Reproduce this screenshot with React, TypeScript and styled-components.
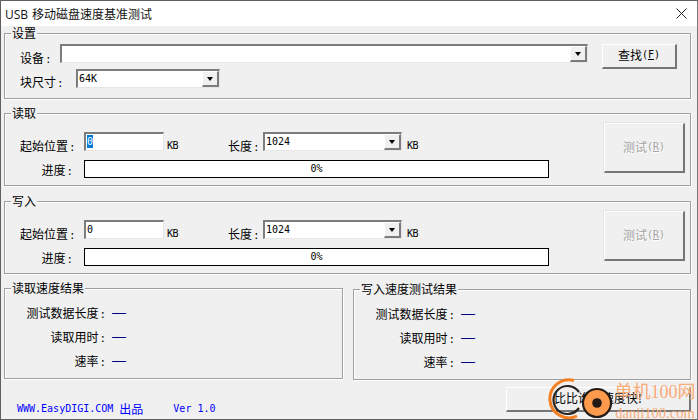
import React from "react";
import styled, { createGlobalStyle } from "styled-components";

const MONO = `"DejaVu Sans Mono", "Liberation Mono", monospace`;

const Global = createGlobalStyle`
  html, body { margin: 0; padding: 0; background: #f0f0f0; }
  body { font-family: "Noto Sans CJK SC", "Liberation Sans", sans-serif; font-size: 12px; color: #000; }
`;

const Window = styled.div`
  position: relative;
  width: 698px;
  height: 420px;
  box-sizing: border-box;
  border: 1px solid #5f5f5f;
  border-right-color: #7a7a7a;
  background: #f0f0f0;
  overflow: hidden;
  display: flex;
  flex-direction: column;
`;

const TitleBar = styled.div`
  height: 25px;
  flex: none;
  background: #fff;
  display: flex;
  align-items: center;
  justify-content: space-between;
  padding: 0 10px 0 4px;
  font-size: 12px;
  line-height: 25px;
  color: #111;
`;

const TitleLatin = styled.span`
  font-family: "Open Sans", "Liberation Sans", sans-serif;
  font-size: 12px;
  margin-right: 4px;
`;

const Content = styled.div`
  flex: 1;
  display: flex;
  flex-direction: column;
  padding: 7px 6px 0 3px;
`;

const Group = styled.section<{ $h: number; $mt?: number; $w?: number }>`
  position: relative;
  box-sizing: border-box;
  height: ${(p) => p.$h}px;
  margin-top: ${(p) => p.$mt ?? 0}px;
  width: ${(p) => (p.$w ? `${p.$w}px` : "auto")};
  border: 1px solid #a0a0a0;
  box-shadow: 1px 1px 0 #fff, inset 1px 1px 0 #fff;
`;

const Legend = styled.h2`
  position: absolute;
  top: -8px;
  left: 6px;
  margin: 0;
  padding: 0 1px 0 1px;
  background: #f0f0f0;
  font-size: 12px;
  font-weight: 400;
  line-height: 14px;
`;

const Row = styled.div<{ $mt?: number; $h?: number }>`
  display: flex;
  align-items: flex-start;
  height: ${(p) => p.$h ?? 19}px;
  margin-top: ${(p) => p.$mt ?? 0}px;
`;

const SettingsBody = styled.div`
  display: flex;
  align-items: flex-start;
  padding: 10px 0 0 15px;
`;

const SettingsFields = styled.div`
  width: 568px;
  display: flex;
  flex-direction: column;
`;

const TestBody = styled.div`
  display: flex;
  align-items: flex-start;
  justify-content: space-between;
  padding: 9px 5px 0 15px;
`;

const TestFields = styled.div`
  padding-top: 9px;
`;

const Label = styled.div<{ $w: number; $mt?: number; $ml?: number; $left?: boolean }>`
  flex: none;
  width: ${(p) => p.$w}px;
  height: 16px;
  margin-top: ${(p) => p.$mt ?? 6}px;
  margin-left: ${(p) => p.$ml ?? 0}px;
  text-align: ${(p) => (p.$left ? "left" : "right")};
  line-height: 16px;
  white-space: nowrap;
`;

const Colon = styled.span`
  font-family: "Liberation Mono", monospace;
  font-size: 11px;
  line-height: 1;
  margin-left: 1px;
`;

const Sunken = styled.div<{ $w: number; $ml?: number }>`
  flex: none;
  box-sizing: border-box;
  width: ${(p) => p.$w}px;
  height: 19px;
  margin-left: ${(p) => p.$ml ?? 0}px;
  background: #fff;
  border-style: solid;
  border-width: 2px 1px 1px 2px;
  border-color: #7c7c7c #e6e6e6 #e6e6e6 #7c7c7c;
  display: flex;
  align-items: flex-start;
  justify-content: space-between;
  font-family: ${MONO};
  font-size: 10px;
  line-height: 15px;
  padding-left: 1px;
`;

const Selected = styled.span`
  background: #0078d7;
  color: #fff;
  display: inline-block;
  height: 13px;
  line-height: 13px;
  margin-top: 1px;
`;

const ArrowButton = styled.div`
  flex: none;
  box-sizing: border-box;
  width: 17px;
  height: 16px;
  background: #f0f0f0;
  border-style: solid;
  border-width: 1px 2px 2px 1px;
  border-color: #fff #7c7c7c #7c7c7c #fff;
  display: flex;
  align-items: center;
  justify-content: center;
  &::before {
    content: "";
    border-style: solid;
    border-width: 4px 3.5px 0 3.5px;
    border-color: #000 transparent transparent transparent;
  }
`;

const Unit = styled.div<{ $ml: number }>`
  flex: none;
  font-family: ${MONO};
  font-size: 10px;
  line-height: 12px;
  margin: 8px 0 0 ${(p) => p.$ml}px;
  width: 11px;
  white-space: nowrap;
  letter-spacing: -0.5px;
`;

const Progress = styled.div`
  box-sizing: border-box;
  width: 465px;
  height: 18px;
  margin-left: 11px;
  background: #fff;
  border: 1px solid #000;
  text-align: center;
  font-family: ${MONO};
  font-size: 10px;
  line-height: 16px;
`;

const Button = styled.div<{ $w: number; $h: number; $mt?: number; $disabled?: boolean }>`
  flex: none;
  box-sizing: border-box;
  width: ${(p) => p.$w}px;
  height: ${(p) => p.$h}px;
  margin-top: ${(p) => p.$mt ?? 0}px;
  padding-bottom: 2px;
  background: #f0f0f0;
  border-style: solid;
  border-width: 1px 2px 2px 1px;
  border-color: #fff #767676 #767676 #fff;
  box-shadow: -1px -1px 0 ${(p) => (p.$disabled ? "#e4e4e4" : "#f0f0f0")};
  display: flex;
  align-items: center;
  justify-content: center;
  font-size: 12px;
  line-height: 16px;
  color: ${(p) => (p.$disabled ? "#a3a3a3" : "#000")};
  text-shadow: ${(p) => (p.$disabled ? "1px 1px 0 #fff" : "none")};
`;

const Latin = styled.span`
  font-family: ${MONO};
  font-size: 10px;
  line-height: 16px;
`;

const FindSlot = styled.div`
  margin-left: 14px;
`;

const ResultsRow = styled.div`
  display: flex;
  justify-content: space-between;
  align-items: flex-start;
  margin-top: 14px;
  height: 91px;
`;

const ResultsBody = styled.div`
  display: flex;
  flex-direction: column;
  gap: 8px;
  padding-top: 16px;
`;

const ResultRow = styled.div`
  display: flex;
  align-items: center;
  height: 16px;
`;

const ResultLabel = styled.div`
  width: 101px;
  height: 16px;
  text-align: right;
  white-space: nowrap;
  line-height: 16px;
`;

const ResultValue = styled.div`
  margin: -3px 0 0 6px;
  color: #000080;
  font-family: "Liberation Sans", sans-serif;
  font-size: 14px;
  line-height: 16px;
`;

const Footer = styled.div`
  display: flex;
  justify-content: space-between;
  align-items: flex-start;
  margin-top: 8px;
`;

const Credit = styled.div`
  display: flex;
  align-items: center;
  height: 16px;
  color: #0000ff;
  margin: 14px 0 0 13px;
  font-size: 12px;
  line-height: 16px;
`;

const CreditName = styled.span`
  margin-left: 6px;
`;

const Version = styled.span`
  font-family: ${MONO};
  font-size: 10px;
  margin-left: 30px;
`;

const WatermarkLogo = styled.svg`
  position: absolute;
  left: 540px;
  top: 371px;
`;

const WatermarkText = styled.div`
  position: absolute;
  left: 611px;
  top: 380px;
  width: 86px;
  color: #f9ab78;
  font-family: "Liberation Serif", "Noto Sans CJK SC", serif;
  text-align: center;
  white-space: nowrap;
`;

const WatermarkName = styled.div`
  font-size: 18px;
  line-height: 23px;
`;

const WatermarkUrl = styled.div`
  font-size: 14.5px;
  line-height: 16px;
  margin-top: 1px;
`;

function Combo({ w, ml, value }: { w: number; ml?: number; value?: string }) {
  return (
    <Sunken $w={w} $ml={ml}>
      <span>{value}</span>
      <ArrowButton />
    </Sunken>
  );
}

function TestSection({ title, mt, selected }: { title: string; mt: number; selected?: boolean }) {
  return (
    <Group $h={73} $mt={mt}>
      <Legend>{title}</Legend>
      <TestBody>
        <TestFields>
          <Row>
            <Label $w={53}>起始位置<Colon>:</Colon></Label>
            <Sunken $w={80} $ml={11}>{selected ? <Selected>0</Selected> : <span>0</span>}</Sunken>
            <Unit $ml={3}>KB</Unit>
            <Label $w={29} $ml={50} $left>长度<Colon>:</Colon></Label>
            <Combo w={139} ml={6} value="1024" />
            <Unit $ml={5}>KB</Unit>
          </Row>
          <Row $mt={9} $h={18}>
            <Label $w={53} $mt={2}>进度<Colon>:</Colon></Label>
            <Progress>0%</Progress>
          </Row>
        </TestFields>
        <Button $w={81} $h={50} $disabled>测试<Latin>(<u>R</u>)</Latin></Button>
      </TestBody>
    </Group>
  );
}

function ResultBox({ title, w, mt }: { title: string; w: number; mt?: number }) {
  return (
    <Group $h={91} $w={w} $mt={mt}>
      <Legend>{title}</Legend>
      <ResultsBody>
        <ResultRow><ResultLabel>测试数据长度<Colon>:</Colon></ResultLabel><ResultValue>—</ResultValue></ResultRow>
        <ResultRow><ResultLabel>读取用时<Colon>:</Colon></ResultLabel><ResultValue>—</ResultValue></ResultRow>
        <ResultRow><ResultLabel>速率<Colon>:</Colon></ResultLabel><ResultValue>—</ResultValue></ResultRow>
      </ResultsBody>
    </Group>
  );
}

export default function App() {
  return (
    <>
      <Global />
      <Window>
        <TitleBar>
          <span><TitleLatin>USB</TitleLatin>移动磁盘速度基准测试</span>
          <svg width="11" height="11" viewBox="0 0 11 11" aria-hidden="true">
            <path d="M0.5 0.5L10.5 10.5M10.5 0.5L0.5 10.5" stroke="#222" strokeWidth="1" fill="none" />
          </svg>
        </TitleBar>
        <Content>
          <Group $h={66}>
            <Legend>设置</Legend>
            <SettingsBody>
              <SettingsFields>
                <Row>
                  <Label $w={30} $left>设备<Colon>:</Colon></Label>
                  <Combo w={528} ml={10} />
                </Row>
                <Row $mt={6}>
                  <Label $w={45} $left $mt={5}>块尺寸<Colon>:</Colon></Label>
                  <Combo w={144} ml={11} value="64K" />
                </Row>
              </SettingsFields>
              <FindSlot>
                <Button $w={75} $h={25}>查找<Latin>(<u>F</u>)</Latin></Button>
              </FindSlot>
            </SettingsBody>
          </Group>
          <TestSection title="读取" mt={14} selected />
          <TestSection title="写入" mt={15} />
          <ResultsRow>
            <ResultBox title="读取速度结果" w={339} />
            <ResultBox title="写入速度测试结果" w={338} mt={1} />
          </ResultsRow>
          <Footer>
            <Credit>
              <Latin>WWW.EasyDIGI.COM</Latin>
              <CreditName>出品</CreditName>
              <Version>Ver 1.0</Version>
            </Credit>
            <Button $w={185} $h={25}>比比谁的速度快!</Button>
          </Footer>
        </Content>
        <WatermarkLogo width="80" height="49" viewBox="0 0 80 49" aria-hidden="true">
          <path d="M33 8.5 A19 19 0 1 0 36 44" fill="none" stroke="#f47f20" strokeWidth="3" />
          <path d="M38 20 A14 14 0 1 0 38 36" fill="none" stroke="#2b2320" strokeWidth="2.2" />
          <circle cx="56" cy="31" r="14" fill="#fd9a4c" stroke="#241c18" strokeWidth="2.2" />
          <circle cx="56" cy="31" r="4.8" fill="#231a16" />
        </WatermarkLogo>
        <WatermarkText>
          <WatermarkName>单机100网</WatermarkName>
          <WatermarkUrl>danji100.com</WatermarkUrl>
        </WatermarkText>
      </Window>
    </>
  );
}
